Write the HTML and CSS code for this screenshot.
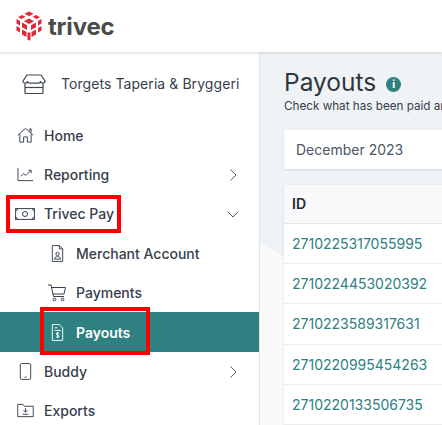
FILE: index.html
```html
<!DOCTYPE html>
<html lang="en">
<head>
  <meta charset="UTF-8" />
  <meta name="viewport" content="width=device-width, initial-scale=1.0"/>
  <title>Payouts - Trivec</title>
  <link rel="stylesheet" href="styles.css">
</head>
<body>
  <header class="topbar">
    <svg class="logo-mark" viewBox="0 0 28 30" width="28" height="30" aria-hidden="true">
      <g fill="#dc2a35">
        <path d="M14 .5l4.500 2.300-4.500 2.400-4.500-2.400z"/>
        <path d="M7 4l3.500 1.800-4 2.300-3.500-1.900z"/>
        <path d="M21 4l4 2.200-3.500 1.900-4-2.300z"/>
        <path d="M14 7.500l5 2.700-5 2.800-5-2.800z"/>
        <path d="M1.500 8l3.500 2v4.500l-3.500-2z"/>
        <path d="M26.500 8v4.500l-3.500 2V10z"/>
        <path d="M7 11.500l5 2.800v4.700l-5-2.800z"/>
        <path d="M21 11.500v4.700l-5 2.800v-4.700z"/>
        <path d="M1.500 15l3.500 2v4.500l-3.500-2z"/>
        <path d="M26.500 15v4.500l-3.500 2V17z"/>
        <path d="M7 18.500l4.500 2.500v5L7 23.500z"/>
        <path d="M21 18.500v5L16.500 26v-5z"/>
        <path d="M12.500 21.500h3V29.500l-3-.5z"/>
      </g>
    </svg>
    <span class="logo-text">trivec</span>
  </header>

  <div class="layout">
    <aside class="sidebar">
      <div class="store">
        <svg class="store-icon" viewBox="0 0 24 20" width="24" height="20" fill="none" stroke="#3c4650" stroke-width="1.200" aria-hidden="true">
          <path d="M5 1h14l4 6c0 1.500-1 2.200-2.200 2.200S18.500 8.500 18.500 7c0 1.500-1 2.200-2.200 2.200H7.700C6.500 9.200 5.500 8.500 5.500 7c0 1.500-1 2.200-2.300 2.200S1 8.500 1 7z"/>
          <path d="M3 9.500V18.500a1 1 0 0 0 1 1H20a1 1 0 0 0 1-1V9.500"/>
          <path d="M3 13.500H21"/>
        </svg>
        <span>Torgets Taperia &amp; Bryggeri</span>
      </div>

      <nav class="menu">
        <a class="item">
          <svg class="icon" viewBox="0 0 18 18" aria-hidden="true"><path d="M.8 8.800L9 1.500l8.200 7.300M3 7.500V16h4v-5.500h4V16h4V7.500M13.500 4.500V2H15v4"/></svg>
          <span>Home</span>
        </a>
        <a class="item">
          <svg class="icon" viewBox="0 0 18 18" aria-hidden="true"><path d="M1 2v13.500h16M4 11l3-3 2.500 2 5-5M12 4.500h3v3"/></svg>
          <span>Reporting</span>
          <svg class="caret" viewBox="0 0 12 12" aria-hidden="true"><path d="M3.500 .5L9 6l-5.500 5.500"/></svg>
        </a>
        <a class="item">
          <svg class="icon icon-wide" viewBox="0 0 20 12" aria-hidden="true"><rect x=".6" y=".6" width="18.800" height="10.800"/><path d="M.6 2.600a2 2 0 0 0 2-2M17.400 .6a2 2 0 0 0 2 2M19.400 9.400a2 2 0 0 0-2 2M2.600 11.400a2 2 0 0 0-2-2"/><circle cx="10" cy="6" r="2.500"/></svg>
          <span>Trivec Pay</span>
          <svg class="caret" viewBox="0 0 12 12" aria-hidden="true"><path d="M.5 3.500L6 9l5.500-5.500"/></svg>
        </a>
        <a class="item sub">
          <svg class="icon" viewBox="0 0 18 18" aria-hidden="true"><path d="M3.500 .6h7.500l3.500 3.500V17.400h-11zM11 .6v3.500h3.500"/><circle cx="9" cy="9.500" r="1.700"/><path d="M5.800 15c0-2 1.500-2.700 3.200-2.700s3.200.7 3.200 2.700z"/></svg>
          <span>Merchant Account</span>
        </a>
        <a class="item sub">
          <svg class="icon icon-cart" viewBox="0 0 18 18" aria-hidden="true"><path d="M0 1h3l2.500 11.500h10.500M3.500 3.500H17.500l-1.500 6.500H5"/><circle cx="6.500" cy="15.500" r="1.400"/><circle cx="14.500" cy="15.500" r="1.400"/></svg>
          <span>Payments</span>
        </a>
        <a class="item sub active">
          <svg class="icon" viewBox="0 0 18 18" aria-hidden="true"><path d="M3.500 .6h7.500l3.500 3.500V17.400h-11zM6 4h3M6 6.800h6.500"/><path d="M10.800 9.800c-.5-.6-3.200-.8-3.200 .8s3.200 .7 3.200 2.300-2.700 1.300-3.200 .7M9.200 8.500v6.500"/></svg>
          <span>Payouts</span>
        </a>
        <a class="item">
          <svg class="icon" viewBox="0 0 18 18" aria-hidden="true"><rect x="3.500" y=".6" width="11" height="16.800" rx="1.500"/><path d="M8 15h2"/></svg>
          <span>Buddy</span>
          <svg class="caret" viewBox="0 0 12 12" aria-hidden="true"><path d="M3.500 .5L9 6l-5.500 5.500"/></svg>
        </a>
        <a class="item">
          <svg class="icon" viewBox="0 0 18 18" aria-hidden="true"><path d="M.8 2.500h5.500l1.500 2h9.400V15.500H.8zM9 6.500v4M6.800 8.500L9 10.800l2.200-2.300M6 13h6"/></svg>
          <span>Exports</span>
        </a>
      </nav>
    </aside>

    <main class="content">
      <div class="title-row">
        <h1>Payouts</h1>
        <span class="info">i</span>
      </div>
      <p class="subtitle">Check what has been paid and when to your account</p>

      <div class="card period">December 2023</div>

      <div class="card table">
        <div class="table-head">ID</div>
        <a class="table-row">2710225317055995</a>
        <a class="table-row">2710224453020392</a>
        <a class="table-row">2710223589317631</a>
        <a class="table-row">2710220995454263</a>
        <a class="table-row">2710220133506735</a>
      </div>
    </main>
  </div>

  <div class="mark mark-pay"></div>
  <div class="mark mark-payouts"></div>
</body>
</html>
```

FILE: styles.css
```css
:root {
  --teal: #2e8081;
  --text: #36404c;
  --bg-main: #eff3f5;
}

html, body {
  height: 100%;
}

body {
  margin: 0;
  font-family: Inter, "Liberation Sans", sans-serif;
  color: var(--text);
  background: #fff;
  overflow: hidden;
  position: relative;
}

.topbar {
  height: 52px;
  box-sizing: border-box;
  display: flex;
  align-items: center;
  gap: 5px;
  padding-left: 15px;
  background: #fff;
  box-shadow: 0 1px 3px rgba(0, 0, 0, 0.15);
  position: relative;
  z-index: 1;
}

.logo-text {
  font-size: 24px;
  font-weight: 700;
  color: #4b4b4d;
  letter-spacing: -0.2px;
}

.layout {
  display: flex;
  height: calc(100% - 52px);
}

.sidebar {
  width: 260px;
  box-sizing: border-box;
  flex: none;
  background: #fff;
  border-right: 1px solid #e3e6e9;
}

.store {
  height: 63.5px;
  display: flex;
  align-items: center;
  gap: 15px;
  padding-left: 22px;
  font-size: 14px;
  letter-spacing: 0.07px;
}

.menu {
  display: flex;
  flex-direction: column;
}

.item {
  height: 39.4px;
  flex: none;
  display: flex;
  align-items: center;
  padding-left: 17px;
  font-size: 14px;
  font-weight: 500;
}

.item .icon {
  width: 17px;
  height: 17px;
  margin-right: 10px;
  fill: none;
  stroke: #36404c;
  stroke-width: 1;
  flex: none;
}

.item .icon-wide {
  width: 20px;
  height: 12px;
  margin-left: -2px;
  margin-right: 9px;
}

.item .icon-cart {
  width: 18px;
  height: 18px;
  margin-left: -1px;
}

.item .caret {
  width: 12px;
  height: 12px;
  margin-left: auto;
  margin-right: 20px;
  fill: none;
  stroke: #555f6a;
  stroke-width: 1;
}

.item.sub {
  padding-left: 49px;
}

.item.active {
  background: var(--teal);
  color: #fff;
  font-weight: 600;
}

.item.active .icon {
  stroke: #fff;
}

.content {
  flex: 1;
  min-width: 0;
  background: var(--bg-main);
  padding: 16px 0 0 24px;
  overflow: hidden;
  position: relative;
}

/* lighter lower part of the page background */
.content::before {
  content: "";
  position: absolute;
  left: 0;
  top: 191px;
  width: 24px;
  bottom: 0;
  background: #f9fafb;
  clip-path: polygon(0 0, 100% 13px, 100% 100%, 0 100%);
}

.title-row {
  display: flex;
  align-items: center;
  gap: 10px;
}

h1 {
  margin: 0;
  font-size: 24.5px;
  font-weight: 400;
  line-height: 29px;
  color: #2e3640;
}

.info {
  width: 15px;
  height: 15px;
  margin-top: 4px;
  border-radius: 50%;
  background: var(--teal);
  color: #fff;
  font-size: 10px;
  font-weight: 800;
  line-height: 15px;
  text-align: center;
}

.subtitle {
  margin: 2px 0 0;
  font-size: 11.7px;
  line-height: 14px;
  white-space: nowrap;
}

.card {
  width: 300px;
  background: #fff;
  box-shadow: 0 1px 3px rgba(0, 0, 0, 0.1);
}

.period {
  margin-top: 17px;
  height: 39px;
  box-sizing: border-box;
  padding-left: 12px;
  font-size: 14px;
  line-height: 39px;
  color: #4a5566;
  border-radius: 2px;
}

.table {
  margin-top: 16px;
  position: relative;
}

.table-head {
  height: 39px;
  box-sizing: border-box;
  padding-left: 8px;
  font-size: 14px;
  font-weight: 600;
  line-height: 38px;
  color: #1e2630;
  background: #f8f9fa;
  border-bottom: 1px solid #e4e7ea;
}

.table-row {
  display: block;
  height: 40.2px;
  box-sizing: border-box;
  padding-left: 8px;
  font-size: 14px;
  line-height: 39px;
  color: var(--teal);
  border-bottom: 1px solid #eceef0;
}

.mark {
  position: absolute;
  box-sizing: border-box;
  border: 4px solid #f00;
}

.mark-pay {
  left: 6px;
  top: 195px;
  width: 115px;
  height: 38px;
}

.mark-payouts {
  left: 40px;
  top: 307px;
  width: 110px;
  height: 48px;
}
```
